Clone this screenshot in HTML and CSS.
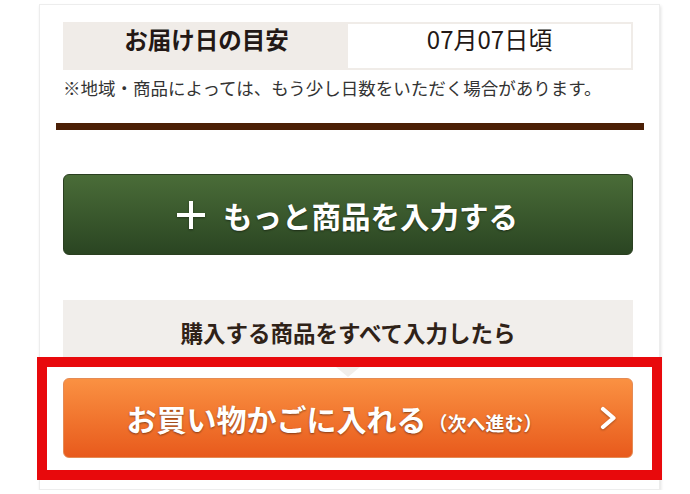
FILE: index.html
```html
<!DOCTYPE html>
<html lang="ja">
<head>
<meta charset="utf-8">
<link rel="stylesheet" href="styles.css">
</head>
<body>
<div class="card">
  <div class="eta">
    <div class="eta-label">お届け日の目安</div>
    <div class="eta-value">07月07日頃</div>
  </div>
  <p class="note">※地域・商品によっては、もう少し日数をいただく場合があります。</p>
  <div class="rule"></div>
  <a class="btn btn-green" href="#">
    <svg class="plus" width="30" height="30" viewBox="0 0 30 30"><path d="M15 1V29M1 15H29" stroke="#fff" stroke-width="4" fill="none"/></svg>
    <span>もっと商品を入力する</span>
  </a>
  <div class="hint">購入する商品をすべて入力したら</div>
  <a class="btn btn-orange" href="#">
    <span class="label">お買い物かごに入れる<small>（次へ進む）</small></span>
    <svg class="chev" width="17" height="24" viewBox="0 0 17 24"><path d="M3 3L13.5 12L3 21" stroke="#fff" stroke-width="4.2" stroke-linecap="round" stroke-linejoin="round" fill="none"/></svg>
  </a>
  <div class="highlight"></div>
</div>
</body>
</html>
```
FILE: styles.css
```css
html, body {
  margin: 0;
  padding: 0;
  background: #fff;
}
body {
  font-family: "Noto Sans CJK JP", "Noto Sans", sans-serif;
  color: #2a1d14;
}
.card {
  position: relative;
  box-sizing: border-box;
  width: 621px;
  height: 486px;
  margin: 4px 0 0 39px;
  padding: 17px 26px 0 23px;
  background: #fff;
  border: 1px solid #ededed;
  box-shadow: 1px 2px 3px rgba(0, 0, 0, 0.12);
}
.eta {
  display: grid;
  grid-template-columns: 1fr 1fr;
  height: 48px;
  box-sizing: border-box;
  border: 2px solid #f0ece8;
}
.eta-label, .eta-value {
  text-align: center;
  font-size: 23.5px;
  line-height: 30px;
}
.eta-label {
  background: #f0ece8;
  font-weight: 700;
  color: #231815;
}
.eta-value {
  color: #231815;
  font-size: 24px;
}
.note {
  margin: 6px 0 0;
  font-size: 17.5px;
  line-height: 24px;
  color: #333;
  white-space: nowrap;
}
.rule {
  height: 7px;
  margin: 23px -11px 0 -7px;
  background: #4b1f06;
}
.btn {
  box-sizing: border-box;
  display: flex;
  align-items: center;
  text-decoration: none;
  color: #fff;
  font-weight: 700;
  border-radius: 6px;
  text-shadow: 0 1px 2px rgba(0, 0, 0, 0.45);
}
.btn-green {
  justify-content: center;
  gap: 17px;
  height: 81px;
  margin-top: 44px;
  font-size: 29.5px;
  background: linear-gradient(#4a6c38, #2a4522);
  border: 1px solid #2a3f20;
  padding-right: 2px;
}
.plus {
  filter: drop-shadow(0 1px 1px rgba(0, 0, 0, 0.4));
}
.hint {
  position: relative;
  height: 67px;
  margin-top: 45px;
  box-sizing: border-box;
  padding-top: 17px;
  background: #f1eeeb;
  text-align: center;
  font-size: 22.5px;
  line-height: 30px;
  font-weight: 700;
  color: #2f2218;
}
.hint::after {
  content: "";
  position: absolute;
  left: 50%;
  top: 100%;
  margin-left: -12px;
  border-left: 12px solid transparent;
  border-right: 12px solid transparent;
  border-top: 10px solid #f1eeeb;
}
.btn-orange {
  height: 80px;
  margin-top: 11px;
  padding-left: 5px;
  background: linear-gradient(#fa9142, #e85a1c);
  border: 1px solid #e48b55;
}
.btn-orange .label {
  flex: 1;
  text-align: center;
  font-size: 30px;
  white-space: nowrap;
}
.btn-orange small {
  font-size: 19px;
  margin-left: 2px;
}
.chev {
  margin-right: 15px;
  filter: drop-shadow(0 1px 1px rgba(0, 0, 0, 0.3));
}
.highlight {
  position: absolute;
  left: -3px;
  top: 352px;
  width: 625px;
  height: 123px;
  box-sizing: border-box;
  border: 10px solid #e8090c;
  pointer-events: none;
}
```
